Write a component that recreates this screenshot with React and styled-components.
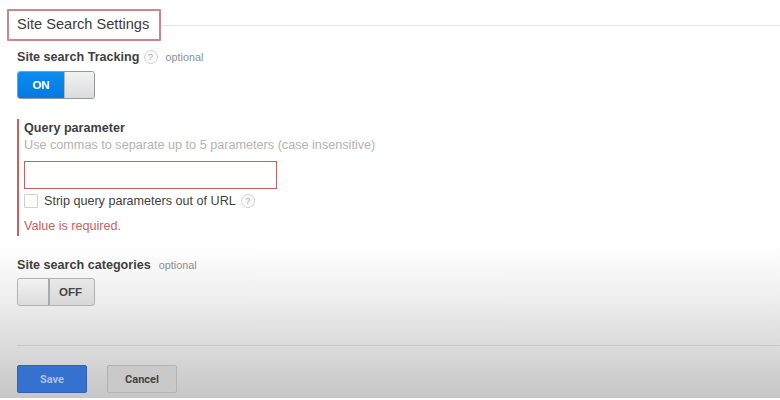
import React from "react";
import styled, { createGlobalStyle } from "styled-components";

const Global = createGlobalStyle`
  html, body { margin: 0; padding: 0; background: #fff; }
  body { font-family: "Liberation Sans", Arial, sans-serif; color: #333; }
`;

const Page = styled.div`
  width: 780px;
  height: 398px;
  overflow: hidden;
  display: flex;
  flex-direction: column;
  background: linear-gradient(to bottom, #fff 0, #fff 245px, #f1f1f1 290px, #dedede 340px, #c6c6c6 398px);
`;

const HeaderRow = styled.div`
  display: flex;
  align-items: center;
  padding: 9px 0 0 7px;
`;

const HeaderBox = styled.div`
  width: 154px;
  height: 32px;
  box-sizing: border-box;
  border: 2px solid #d0838b;
  border-radius: 1px;
  display: flex;
  align-items: center;
  padding: 0 0 2px 8px;
  font-size: 14.6px;
  color: #3c3c3c;
  white-space: nowrap;
`;

const HeaderLine = styled.div`
  flex: 1;
  height: 1px;
  background: #e6e6e6;
`;

const Section = styled.div`
  padding-left: 17px;
`;

const LabelRow = styled.div`
  display: flex;
  align-items: center;
  height: 16px;
  margin-top: ${(p) => p.$top}px;
`;

const Label = styled.span`
  font-size: 12.6px;
  font-weight: 700;
  color: #3f3f3f;
  white-space: nowrap;
`;

const Optional = styled.span`
  font-size: 10.8px;
  color: #8e8e8e;
  margin-left: ${(p) => p.$left}px;
`;

const Help = styled.span`
  width: 12px;
  height: 12px;
  border: 1px solid #d2d2d2;
  border-radius: 50%;
  margin-left: ${(p) => p.$left}px;
  display: inline-flex;
  align-items: center;
  justify-content: center;
  font-size: 9px;
  color: #a8a8a8;
  background: #fafafa;
`;

const Toggle = styled.div`
  width: 76px;
  height: 26px;
  margin-top: ${(p) => p.$top}px;
  border: 1px solid ${(p) => (p.$on ? "#8f9aa5" : "#b2b2b2")};
  border-radius: 3px;
  display: flex;
  overflow: hidden;
  background: linear-gradient(to bottom, #e8e8e8, #d8d8d8);
`;

const ToggleOn = styled.div`
  width: 46px;
  background: linear-gradient(to bottom, #0a8cf0, #0679e0);
  color: #fff;
  font-size: 11.5px;
  font-weight: 700;
  display: flex;
  align-items: center;
  justify-content: center;
`;

const ToggleOff = styled.div`
  flex: 1;
  color: #444;
  font-size: 11.5px;
  font-weight: 700;
  display: flex;
  align-items: center;
  justify-content: center;
  padding-right: 3px;
`;

const Knob = styled.div`
  width: ${(p) => p.$w}px;
  background: linear-gradient(to bottom, #f2f2f2, #dcdcdc);
  border-left: ${(p) => (p.$on ? "1px solid #b5b5b5" : "none")};
  border-right: ${(p) => (p.$on ? "none" : "2px solid #a9a9a9")};
  box-sizing: border-box;
`;

const ErrorBlock = styled.div`
  margin: 20px 0 0 17px;
  height: 117px;
  border-left: 2px solid #c9605f;
  padding-left: 5px;
  display: flex;
  flex-direction: column;
`;

const QueryLabel = styled(Label)`
  margin-top: 2px;
  line-height: 15px;
`;

const Hint = styled.div`
  font-size: 12.65px;
  color: #b3b3b3;
  line-height: 17px;
  margin-top: 1px;
  white-space: nowrap;
`;

const TextField = styled.input`
  display: block;
  width: 253px;
  height: 28px;
  box-sizing: border-box;
  margin: 7px 0 0;
  padding: 0 4px;
  border: 1px solid #c9605f;
  background: #fff;
  outline: none;
`;

const CheckRow = styled.div`
  display: flex;
  align-items: center;
  height: 16px;
  margin-top: 4px;
`;

const Checkbox = styled.span`
  width: 12px;
  height: 12px;
  border: 1px solid #cfcfcf;
  border-radius: 1px;
  background: #fff;
`;

const CheckText = styled.span`
  font-size: 12.6px;
  color: #3f3f3f;
  margin-left: 6px;
  white-space: nowrap;
`;

const ErrorText = styled.div`
  font-size: 12.6px;
  color: #c9605f;
  line-height: 16px;
  margin-top: 9px;
`;

const Divider = styled.div`
  height: 1px;
  background: #c8c8c8;
  margin: 39px 0 0 17px;
`;

const Actions = styled.div`
  display: flex;
  gap: 20px;
  padding: 19px 0 0 17px;
`;

const Button = styled.button`
  width: 70px;
  height: 28px;
  padding: 0;
  border-radius: 2px;
  font-family: Roboto, "Liberation Sans", sans-serif;
  font-size: 11px;
  font-weight: 700;
  border: 1px solid ${(p) => (p.$primary ? "#2f62b8" : "#b4b4b4")};
  color: ${(p) => (p.$primary ? "#a9c1e6" : "#444")};
  background: ${(p) => (p.$primary ? "#3571cf" : "#c9c9c9")};
`;

function HelpIcon({ left }) {
  return <Help $left={left}>?</Help>;
}

export default function App() {
  return (
    <>
      <Global />
      <Page>
        <HeaderRow>
          <HeaderBox>Site Search Settings</HeaderBox>
          <HeaderLine />
        </HeaderRow>
        <Section>
          <LabelRow $top={8}>
            <Label>Site search Tracking</Label>
            <HelpIcon left={4} />
            <Optional $left={8}>optional</Optional>
          </LabelRow>
          <Toggle $on $top={6}>
            <ToggleOn>ON</ToggleOn>
            <Knob $on $w={30} />
          </Toggle>
        </Section>
        <ErrorBlock>
          <QueryLabel>Query parameter</QueryLabel>
          <Hint>Use commas to separate up to 5 parameters (case insensitive)</Hint>
          <TextField />
          <CheckRow>
            <Checkbox />
            <CheckText>Strip query parameters out of URL</CheckText>
            <HelpIcon left={5} />
          </CheckRow>
          <ErrorText>Value is required.</ErrorText>
        </ErrorBlock>
        <Section>
          <LabelRow $top={21}>
            <Label>Site search categories</Label>
            <Optional $left={8}>optional</Optional>
          </LabelRow>
          <Toggle $top={5}>
            <Knob $w={32} />
            <ToggleOff>OFF</ToggleOff>
          </Toggle>
        </Section>
        <Divider />
        <Actions>
          <Button $primary>Save</Button>
          <Button>Cancel</Button>
        </Actions>
      </Page>
    </>
  );
}
